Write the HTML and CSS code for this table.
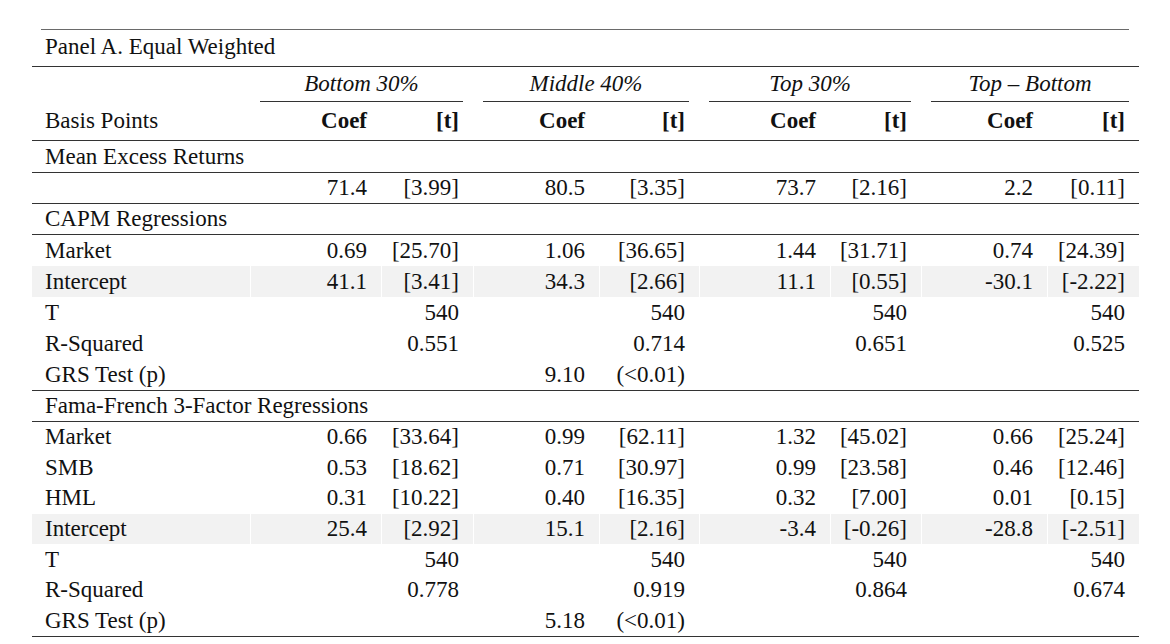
FILE: index.html
```html
<!DOCTYPE html>
<html lang="en">
<head>
<meta charset="utf-8">
<title>Panel A. Equal Weighted</title>
<link rel="stylesheet" href="styles.css">
</head>
<body>
<div class="sheet">
  <div class="panel"><div class="panel-title">Panel A. Equal Weighted</div></div>

  <div class="row groups">
    <span></span>
    <span class="grp">Bottom 30%</span>
    <span class="grp">Middle 40%</span>
    <span class="grp">Top 30%</span>
    <span class="grp">Top – Bottom</span>
  </div>

  <div class="row heads rule">
    <span>Basis Points</span>
    <span>Coef</span><span>[t]</span>
    <span>Coef</span><span>[t]</span>
    <span>Coef</span><span>[t]</span>
    <span>Coef</span><span>[t]</span>
  </div>

  <div class="row sec rule tall"><span>Mean Excess Returns</span></div>

  <div class="row rule">
    <span></span>
    <span>71.4</span><span>[3.99]</span>
    <span>80.5</span><span>[3.35]</span>
    <span>73.7</span><span>[2.16]</span>
    <span>2.2</span><span>[0.11]</span>
  </div>

  <div class="row sec rule"><span>CAPM Regressions</span></div>

  <div class="row">
    <span>Market</span>
    <span>0.69</span><span>[25.70]</span>
    <span>1.06</span><span>[36.65]</span>
    <span>1.44</span><span>[31.71]</span>
    <span>0.74</span><span>[24.39]</span>
  </div>
  <div class="row shade">
    <span>Intercept</span>
    <span>41.1</span><span>[3.41]</span>
    <span>34.3</span><span>[2.66]</span>
    <span>11.1</span><span>[0.55]</span>
    <span>-30.1</span><span>[-2.22]</span>
  </div>
  <div class="row">
    <span>T</span>
    <span></span><span>540</span>
    <span></span><span>540</span>
    <span></span><span>540</span>
    <span></span><span>540</span>
  </div>
  <div class="row">
    <span>R-Squared</span>
    <span></span><span>0.551</span>
    <span></span><span>0.714</span>
    <span></span><span>0.651</span>
    <span></span><span>0.525</span>
  </div>
  <div class="row rule tall">
    <span>GRS Test (p)</span>
    <span></span><span></span>
    <span>9.10</span><span>(&lt;0.01)</span>
    <span></span><span></span>
    <span></span><span></span>
  </div>

  <div class="row sec rule"><span>Fama-French 3-Factor Regressions</span></div>

  <div class="row ff">
    <span>Market</span>
    <span>0.66</span><span>[33.64]</span>
    <span>0.99</span><span>[62.11]</span>
    <span>1.32</span><span>[45.02]</span>
    <span>0.66</span><span>[25.24]</span>
  </div>
  <div class="row ff">
    <span>SMB</span>
    <span>0.53</span><span>[18.62]</span>
    <span>0.71</span><span>[30.97]</span>
    <span>0.99</span><span>[23.58]</span>
    <span>0.46</span><span>[12.46]</span>
  </div>
  <div class="row ff">
    <span>HML</span>
    <span>0.31</span><span>[10.22]</span>
    <span>0.40</span><span>[16.35]</span>
    <span>0.32</span><span>[7.00]</span>
    <span>0.01</span><span>[0.15]</span>
  </div>
  <div class="row ff shade">
    <span>Intercept</span>
    <span>25.4</span><span>[2.92]</span>
    <span>15.1</span><span>[2.16]</span>
    <span>-3.4</span><span>[-0.26]</span>
    <span>-28.8</span><span>[-2.51]</span>
  </div>
  <div class="row ff">
    <span>T</span>
    <span></span><span>540</span>
    <span></span><span>540</span>
    <span></span><span>540</span>
    <span></span><span>540</span>
  </div>
  <div class="row ff">
    <span>R-Squared</span>
    <span></span><span>0.778</span>
    <span></span><span>0.919</span>
    <span></span><span>0.864</span>
    <span></span><span>0.674</span>
  </div>
  <div class="row ff end rule">
    <span>GRS Test (p)</span>
    <span></span><span></span>
    <span>5.18</span><span>(&lt;0.01)</span>
    <span></span><span></span>
    <span></span><span></span>
  </div>
</div>
</body>
</html>
```

FILE: styles.css
```css
* {
  box-sizing: border-box;
}

body {
  margin: 0;
  background: #ffffff;
  font-family: "Liberation Serif", "Times New Roman", serif;
  font-size: 23px;
  color: #111111;
}

.sheet {
  width: 1107px;
  margin: 29px 0 0 32px;
}

.panel {
  height: 38px;
  border-bottom: 1px solid #333333;
}

.panel-title {
  height: 37px;
  margin: 0 10px 0 9px;
  padding: 0 0 2px 4px;
  border-top: 1px solid #6a6a6a;
  display: flex;
  align-items: center;
}

.row {
  display: grid;
  grid-template-columns: 218px 131px 92px 126px 100px 131px 91px 126px 92px;
  height: 31px;
}

.row > span {
  display: flex;
  align-items: center;
  justify-content: flex-end;
  padding-right: 14px;
  white-space: nowrap;
}

.row > span:first-child {
  justify-content: flex-start;
  padding: 0 0 0 13px;
}

.rule {
  border-bottom: 1px solid #333333;
}

.tall {
  height: 32px;
}

.groups {
  height: 35px;
}

.groups .grp {
  grid-column: span 2;
  margin: 0 10px;
  padding: 0;
  justify-content: center;
  border-bottom: 1px solid #333333;
  font-style: italic;
}

.heads {
  height: 39px;
}

.heads > span + span {
  font-weight: bold;
}

.sec > span {
  grid-column: 1 / -1;
}

.shade {
  background: #f2f2f2;
}

.shade > span + span {
  box-shadow: inset 1px 0 0 #ffffff;
}

.ff {
  height: 30.6px;
}

.ff.end {
  height: 31.4px;
}
```
